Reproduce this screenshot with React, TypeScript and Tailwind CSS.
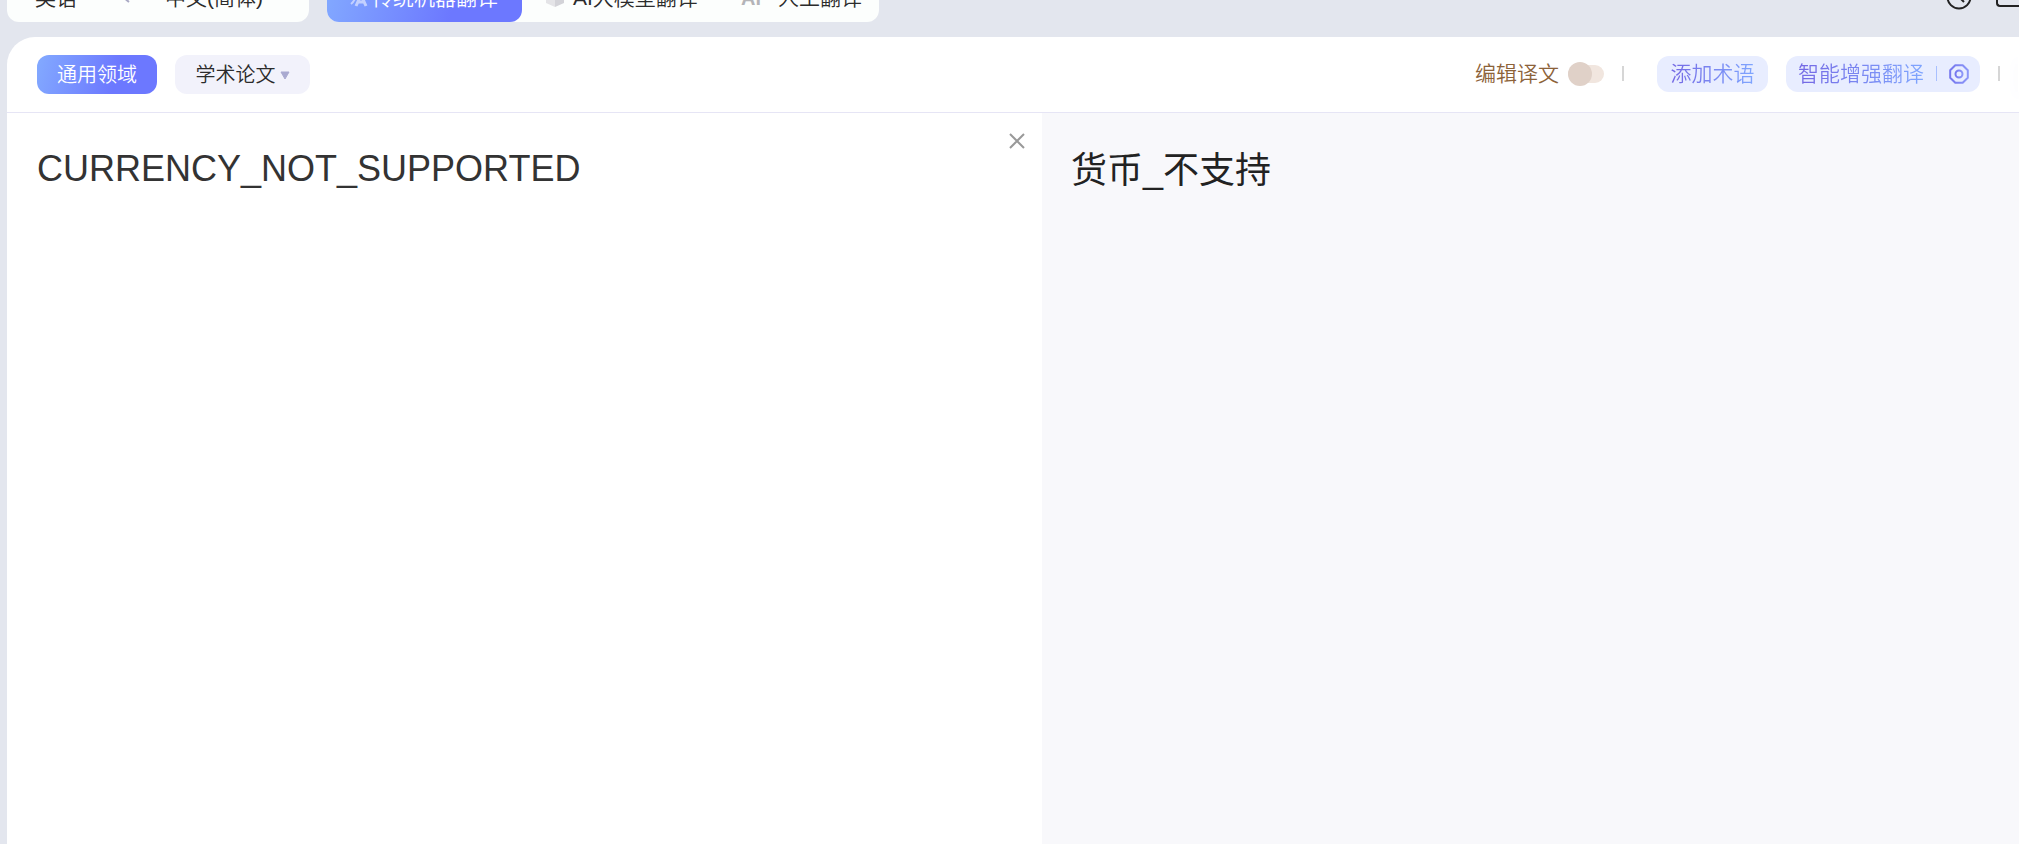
import React, { useState } from 'react';

const gradientText = 'bg-linear-to-r from-[#7468e4] to-[#7fa6ff] bg-clip-text text-transparent';

function SwapIcon() {
  return (
    <svg width="22" height="18" viewBox="0 0 22 18" fill="none" stroke="#a9a9c4" strokeWidth="2" aria-hidden="true">
      <path d="M3 4h16l-5-4M19 8H4l6 5" />
    </svg>
  );
}

function CubeIcon() {
  return (
    <svg width="20" height="20" viewBox="0 0 20 20" aria-hidden="true">
      <path d="M10 0l9 5-9 5-9-5z" fill="#f0f0f2" />
      <path d="M1 5l9 5v9l-9-4z" fill="#e4e4e7" />
      <path d="M19 5l-9 5v9l9-4z" fill="#d3d3d8" />
    </svg>
  );
}

function TranslateIcon() {
  return (
    <svg width="18" height="20" viewBox="0 0 18 20" fill="none" stroke="#c3d0ff" strokeWidth="2" aria-hidden="true">
      <path d="M1 4h9M5 2v2M1 16c4-3 5-7 6-12M3 7c1 2 2 3 4 4" />
      <path d="M6 18l5-11 5 11M8 14h6" strokeWidth="3" />
    </svg>
  );
}

function HistoryIcon() {
  return (
    <svg width="26" height="26" viewBox="0 0 26 26" fill="none" stroke="#222" strokeWidth="2" aria-hidden="true">
      <circle cx="13" cy="13" r="11.5" />
      <path d="M13 6v7l5 5" />
    </svg>
  );
}

function SettingsIcon() {
  return (
    <svg width="20" height="20" viewBox="0 0 20 20" fill="none" stroke="url(#octagon)" strokeWidth="2" aria-hidden="true">
      <defs>
        <linearGradient id="octagon">
          <stop stopColor="#7677ee" />
          <stop offset="1" stopColor="#8c97f8" />
        </linearGradient>
      </defs>
      <path d="M6.3 1.2h7.4l5.1 5.1v7.4l-5.1 5.1H6.3l-5.1-5.1V6.3z" strokeLinejoin="round" />
      <circle cx="10" cy="10" r="3.5" />
    </svg>
  );
}

export default function App() {
  const [source, setSource] = useState('CURRENCY_NOT_SUPPORTED');
  const [editing, setEditing] = useState(false);

  return (
    <div className="flex h-screen flex-col overflow-hidden bg-[#e3e6ee] pl-[7px] font-['Liberation_Sans','Noto_Sans_CJK_SC',sans-serif] font-[350] text-[#2b2b2b]">
      <header className="flex h-[22px] shrink-0 items-end justify-between overflow-hidden text-[21px]">
        <div className="flex shrink-0 gap-[18px]">
          <div className="flex h-12 w-[302px] items-center rounded-xl bg-[#fcfefd] px-7">
            <button className="w-[84px] text-left">英语</button>
            <button aria-label="交换语言" className="w-[46px]"><SwapIcon /></button>
            <button>中文(简体)</button>
          </div>
          <nav className="flex h-12 w-[552px] rounded-xl bg-[#fcfefd]">
            <button className="flex w-[195px] items-center gap-1 rounded-xl bg-linear-[105deg] from-[#83aaff] to-[#6c78ff] to-65% pl-[23px] text-white">
              <TranslateIcon />
              传统机器翻译
            </button>
            <button className="flex w-[196px] items-center gap-2 pl-[23px]">
              <CubeIcon />
              AI大模型翻译
            </button>
            <button className="flex items-center gap-[17px] pl-[23px]">
              <span className="text-xl font-bold text-[#b4b4b8]">Ai</span>
              人工翻译
            </button>
          </nav>
        </div>
        <div className="flex h-[50px] shrink-0 items-center gap-6">
          <button aria-label="历史记录"><HistoryIcon /></button>
          <button aria-label="反馈" className="h-5 w-[23px] rounded-l-sm border-2 border-r-0 border-[#222]" />
        </div>
      </header>

      <main className="mt-[15px] flex flex-1 flex-col overflow-hidden rounded-tl-[28px] bg-white">
        <div className="flex h-[76px] shrink-0 items-center justify-between overflow-hidden border-b border-[#e6e5f5]">
          <div className="flex gap-[18px] pl-[30px] text-xl">
            <button className="h-[39px] w-[120px] rounded-xl bg-linear-[105deg] from-[#83aaff] to-[#6c78ff] to-65% text-white">
              通用领域
            </button>
            <button className="flex h-[39px] w-[135px] items-center justify-center gap-1 rounded-xl bg-[#f2f2fb]">
              学术论文
              <svg width="10" height="8" viewBox="0 0 10 8" fill="#a9a9d0" aria-hidden="true">
                <path d="M1 1h8L5 8z" stroke="#a9a9d0" strokeLinejoin="round" />
              </svg>
            </button>
          </div>
          <div className="mb-0.5 flex items-center text-[21px]">
            <label className="flex items-center gap-[9px] text-[#8c6239]">
              编辑译文
              <span className="relative flex h-6 w-9 items-center">
                <input
                  type="checkbox"
                  checked={editing}
                  onChange={(e) => setEditing(e.target.checked)}
                  className="peer h-[18px] w-9 appearance-none rounded-full bg-[#f1e6df]"
                />
                <span className="absolute left-0 size-6 rounded-full bg-[#e0d1c8] peer-checked:left-3" />
              </span>
            </label>
            <span className="ml-[18px] h-[15px] w-0.5 bg-[#d6d6d6]" />
            <button className="ml-[33px] h-9 w-[111px] rounded-xl bg-[#e8edff]">
              <span className={gradientText}>添加术语</span>
            </button>
            <div className="ml-[18px] flex h-9 w-[194px] items-center rounded-xl bg-[#e8edff] pl-3">
              <button className={gradientText}>智能增强翻译</button>
              <span className="ml-3 h-[15px] w-px bg-[#a9c0ff]" />
              <button aria-label="设置" className="ml-3"><SettingsIcon /></button>
            </div>
            <span className="ml-[18px] h-[15px] w-0.5 bg-[#d6d6d6]" />
            <span className="ml-[18px] h-9 w-px bg-white shadow-[0_4px_12px_#d9daee]" />
          </div>
        </div>

        <div className="grid flex-1 grid-cols-[1035fr_977fr]">
          <section className="flex items-start">
            <textarea
              aria-label="原文"
              value={source}
              onChange={(e) => setSource(e.target.value)}
              className="h-full flex-1 resize-none pt-9 pl-[30px] text-4xl text-[#333] outline-none"
            />
            <button aria-label="清空" className="mt-5 mr-4">
              <svg width="18" height="18" viewBox="0 0 18 18" stroke="#999" strokeWidth="2" aria-hidden="true">
                <path d="M2 1l14 14M16 1L2 15" />
              </svg>
            </button>
          </section>
          <section className="bg-[#f8f8fb] pt-[38px] pl-[29px] text-4xl text-[#222]">
            <p className="font-normal">货币_不支持</p>
          </section>
        </div>
      </main>
    </div>
  );
}
